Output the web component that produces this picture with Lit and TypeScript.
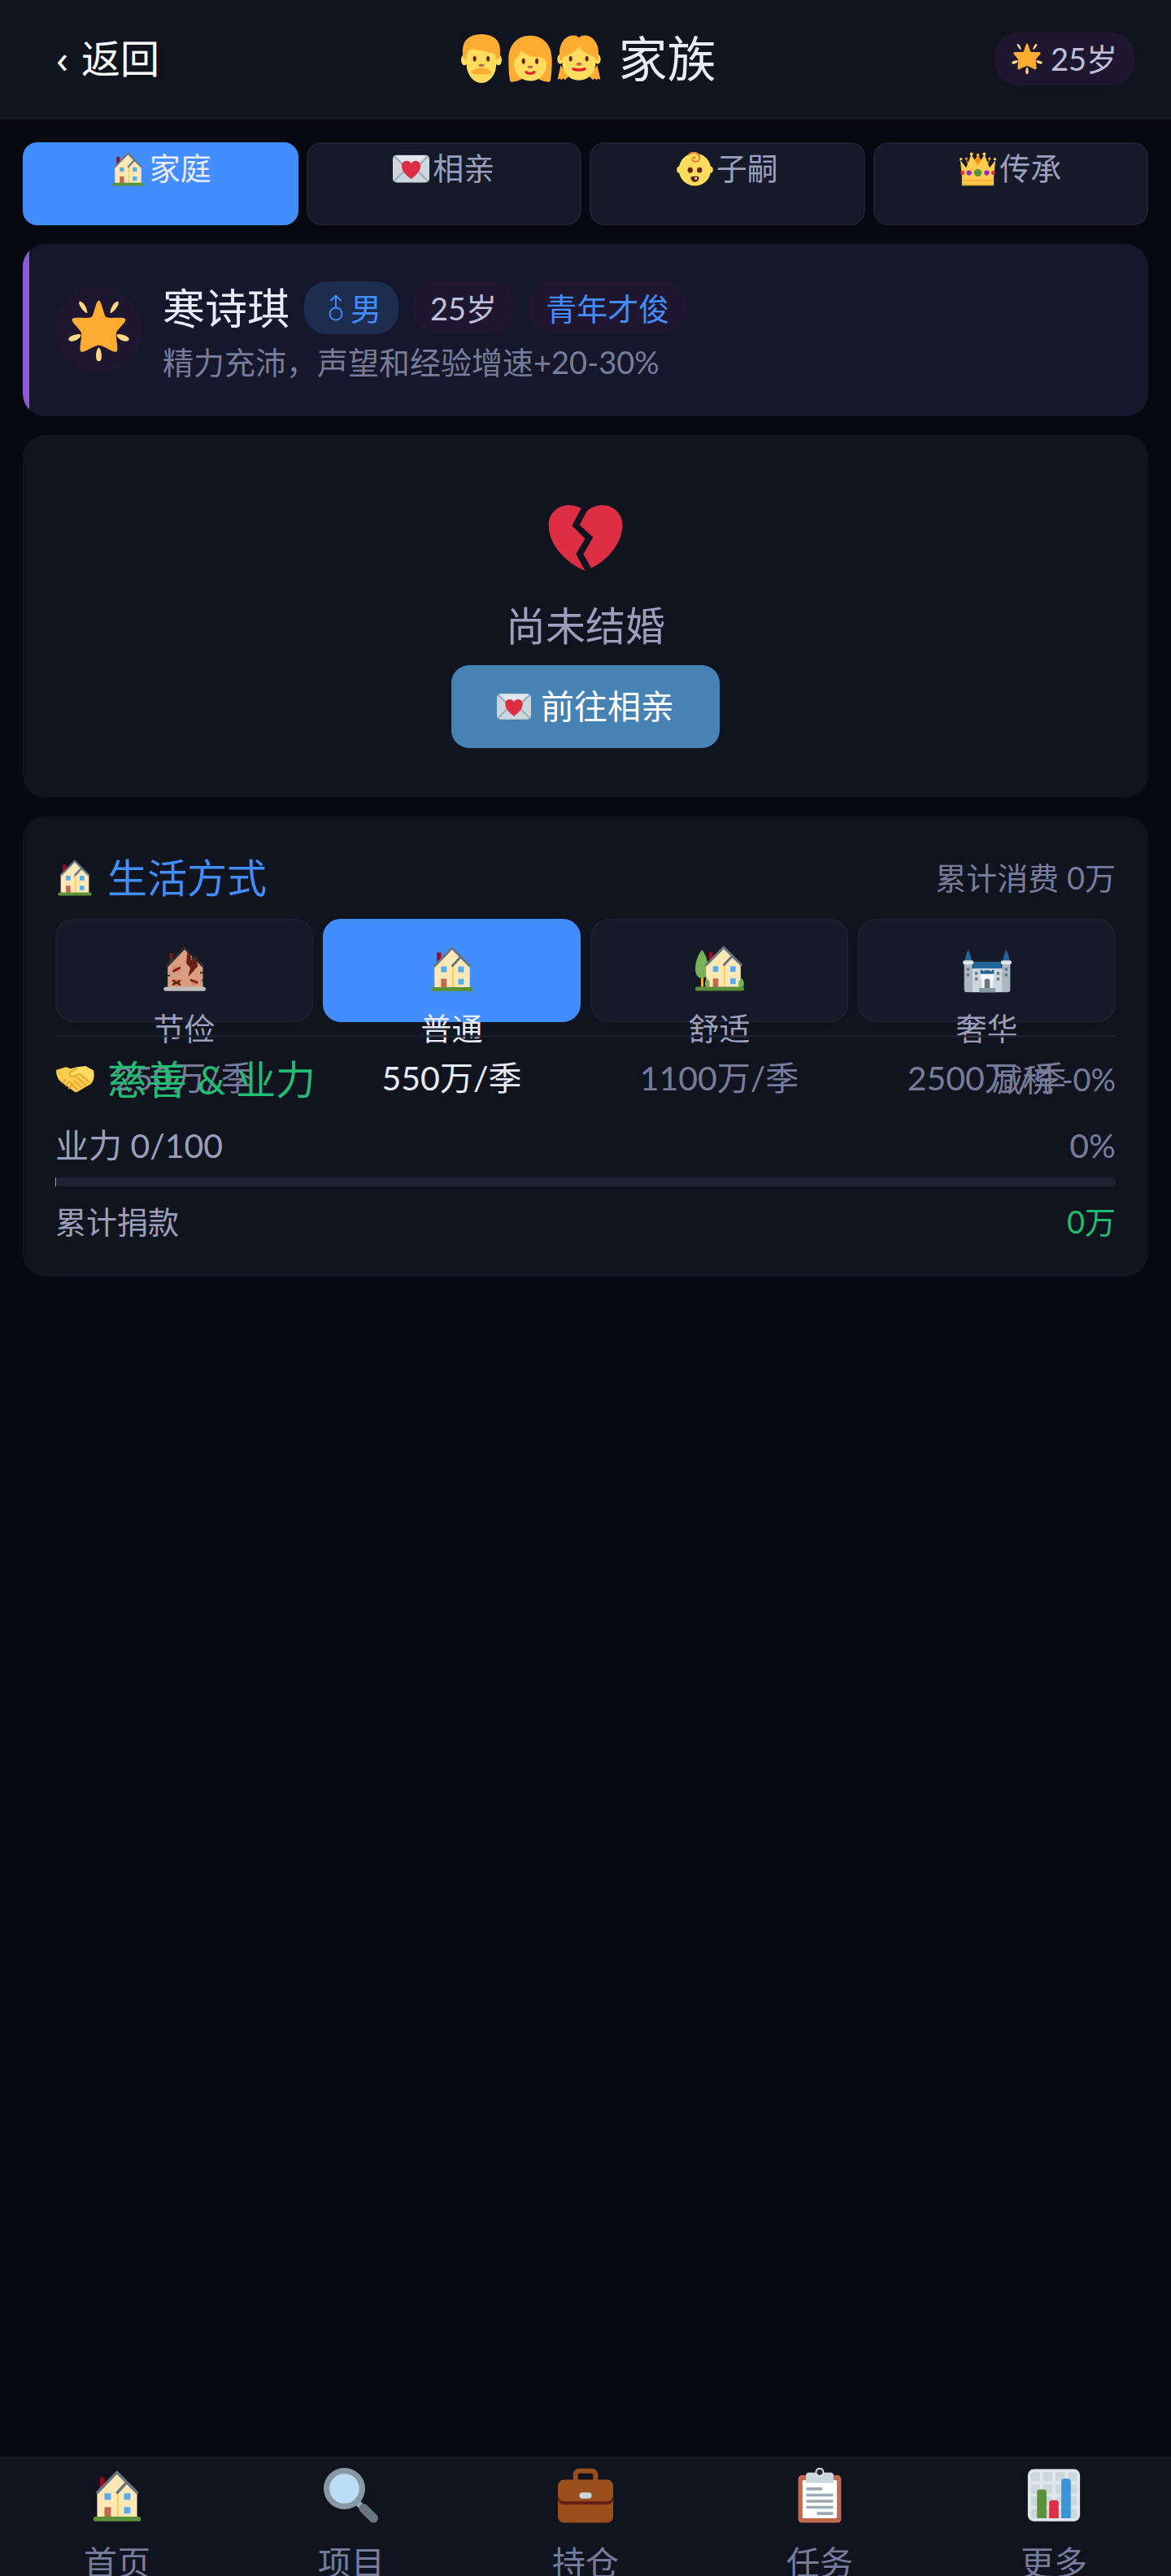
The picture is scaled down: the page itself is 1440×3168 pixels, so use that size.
import {LitElement, html, svg, css} from 'lit'
import {customElement, property, state} from 'lit/decorators.js'
import {classMap} from 'lit/directives/class-map.js'

// All glyphs are drawn on a 36 x 36 grid
const house = svg`
  <path fill="#a0041e" d="M6.7 6.2h3.2v8H6.7z"/>
  <path fill="#ffe8b6" d="M5 16 18 2.6l6.4 8L31 17v15.5H5z"/>
  <path fill="#ffcc4d" d="M18 16h1v16h-1z"/>
  <path fill="none" stroke="#66757f" stroke-width="1.8" stroke-linecap="round" stroke-linejoin="miter" d="M5.2 16 17.9 2.9 30.9 16M18.2 16l5.6-6"/>
  <path fill="#55acee" d="M9.8 16.5H14v4.3H9.8zM22.5 16.5h4.2v4.3h-4.2zM22.5 25.6h4.2v4.2h-4.2z"/>
  <path fill="#c1694f" d="M9.8 25.6H14V32H9.8z"/>
  <rect fill="#5c913b" x="2.5" y="31.8" width="31" height="3" rx="1.5"/>`

const gardenHouse = svg`
  <path fill="#ffac33" d="M4.2 24h1.8v8H4.2z"/>
  <path fill="#77b255" d="M4.9 4.4C2 7.5 0 13.5 0 18.5c0 4 2 6.800 4.900 6.800s4.700-2.800 4.700-6.800c0-5-1.800-11-4.700-14.100z"/>
  <path fill="#a0041e" d="M10.2 6H13v7h-2.800z"/>
  <path fill="#ffe8b6" d="M8 15.500 21 2.300l6.500 7.500 6 6V32H8z"/>
  <path fill="#ffcc4d" d="M21 15h1v17h-1z"/>
  <path fill="none" stroke="#66757f" stroke-width="1.8" stroke-linecap="round" d="M8.200 15.300 21 2.500l12.800 12.800M21.200 15.300l5.500-5.800"/>
  <path fill="#55acee" d="M13 16.400h4v4.200h-4zM25.800 16.400h4v4.200h-4zM25.800 25.400h4v4.200h-4z"/>
  <path fill="#c1694f" d="M13 25.400h4V32h-4z"/>
  <path fill="#77b255" d="M8.500 25.200c-1.400 1.500-1.800 5-.6 6.500h2.400c1-2.500.1-5.200-1.800-6.500zM34 25.200c-2 1.500-2.800 4.500-1.800 6.500h3.200c1-2.500.4-5.200-1.400-6.500z"/>
  <rect fill="#5c913b" y="31.5" width="36" height="3" rx="1.5"/>`

const ruin = svg`
  <path fill="#662113" d="M6.800 6.800h3v7h-3z"/>
  <path fill="#d99e82" d="M5.500 16.500 18 3.400l3 3.400 3.500 3.500 7 6.200V32H5.500z"/>
  <path fill="none" stroke="#292f33" stroke-width="1.7" stroke-linejoin="round" d="M4.600 16.800 18 2.800l3.200 3.600M23.200 11l2-1.200 6.600 6.800"/>
  <path fill="#662113" d="m20 5.600 2.400 2 .4 4.200 3.800-1.800 1.200 6.400-7.200 7.800 1.600-6.600-3-3.400z"/>
  <path fill="#dd7c5f" d="M9.500 16.700h5v4.200h-5zM9.500 26h5v5h-5zM23 26h4.500v4h-4.500z"/>
  <path fill="none" stroke="#662113" stroke-width="1.5" stroke-linecap="round" d="m9.700 20 4.600-2.400M9.500 27l5 2.800M9.500 29.800l5-2.600M22.600 26.600l4.800 1.800"/>
  <path stroke="#292f33" stroke-width="1.2" d="M5 23.200h2.300M29.400 21.200H32M30.500 26.800H32"/>
  <rect fill="#bcbec0" x="2.6" y="31.6" width="31" height="3" rx="1.5"/>`

const castle = svg`
  <path fill="#226699" d="M4 4c-1.200 2.600-2 5-2.600 8.500h5.200C6 9 5.200 6.600 4 4zM32 4c-1.200 2.600-2 5-2.600 8.500h5.200C34 9 33.200 6.600 32 4zM7.500 13h21v6h-21z"/>
  <path fill="#aab8c2" d="M1 14h6v21.600H3a2 2 0 0 1-2-2zM29 14h6v19.600a2 2 0 0 1-2 2h-4z"/>
  <path fill="#ccd6dd" d="M6.800 18h22.400v17.600H6.800z"/>
  <rect fill="#e1e8ed" y="12.2" width="8" height="2.8" rx="1.4"/>
  <rect fill="#e1e8ed" x="28" y="12.2" width="8" height="2.8" rx="1.4"/>
  <path fill="#f5f8fa" d="M13 21h10v5l-1 1v6h-8v-6l-1-1z"/>
  <path fill="#226699" d="M13 19h1.500v1H16v-.6h4v.6h1.500v-1H23v3H13z"/>
  <path fill="#66757f" d="M2.800 17.500h2v2.200h-2zM2.800 21.700h2v2.200h-2zM31 17.500h2v2.200h-2zM31 21.700h2v2.200h-2zM9 20.500h2v2.200H9zM9 24.700h2v2.200H9zM25 20.500h2v2.200h-2zM25 24.700h2v2.200h-2zM16 33v-5.500a2 2 0 0 1 4 0V33z"/>
  <path fill="#8899a6" d="M12 32.400h12v3.200H12z"/>`

const man = svg`
  <ellipse fill="#ffdc5d" cx="5.4" cy="19" rx="2.4" ry="4"/>
  <ellipse fill="#ffdc5d" cx="30.6" cy="19" rx="2.4" ry="4"/>
  <path fill="#ffac33" d="M18 0C9 0 4.200 5 4.200 11.500V17l3 2h21.600l3-2v-5.500C31.800 5 27 0 18 0z"/>
  <path fill="#ffdc5d" d="M7.500 14.500c.8-1.800 2.500-3.200 4.500-3.800 1.500 1 3 1.500 4.800 1.600l-.6-1.300 3 2 .1-1.300c1.200 1.300 2.500 1.700 4.200 1.800 2.600.2 4.500.7 5 2.500.8 3 .8 7-.1 10.500C27 31.500 23 36 18 36S9 31.500 7.600 26.500c-.9-3.500-.9-9-.1-12z"/>
  <path fill="#ffac33" d="M10.200 28.500c1-1.600 3.300-3 5.300-3.300 1.700-.3 3.300-.3 5 0 2 .3 4.300 1.700 5.300 3.300l-1.600.3-.5.9-1.400-.4-1 .9-1.300-.8-1 .8-1-.8-1 .8-1.200-.8-1.300.6-.9-.7-1.400.3-.5-.8z"/>
  <ellipse fill="#662113" cx="13" cy="18.2" rx="1.2" ry="2"/>
  <ellipse fill="#662113" cx="22.9" cy="18.2" rx="1.2" ry="2"/>
  <rect fill="#c1694f" x="16" y="22" width="4" height="2" rx="1"/>`

const woman = svg`
  <path fill="#ffac33" d="M18 1C8 1 2 8.500 2 18.500c0 5 .1 11.500 1.200 16.500 2.300.6 5.500-.2 8.300-1.800h13c2.800 1.600 6 2.400 8.300 1.800C33.900 30 34 23.500 34 18.500 34 8.500 28 1 18 1z"/>
  <path fill="#ffdc5d" d="M6 21.500c0-3.500 3.500-4 5.200-9.500 3 3.300 7.500 4.500 12.500 5 3.700.4 6.300 1.500 6.300 5 0 7-5 12.500-12 12.500S6 28.500 6 21.500z"/>
  <ellipse fill="#662113" cx="13" cy="20" rx="1.2" ry="2.1"/>
  <ellipse fill="#662113" cx="22.9" cy="20" rx="1.2" ry="2.1"/>
  <rect fill="#c1694f" x="16" y="23.2" width="4" height="2" rx="1"/>
  <path fill="none" stroke="#df1f32" stroke-width="2" stroke-linecap="round" d="M15 28c1.600 1.400 4.400 1.400 6 0"/>`

const girl = svg`
  <path fill="#ffac33" d="M4.500 23 2.200 33.500l2-.8.600 1.200 1.600-1.200 1.400 1 3-3zM31.500 23l2.300 10.500-2-.8-.6 1.200-1.600-1.200-1.400 1-3-3z"/>
  <ellipse fill="#ffdc5d" cx="4.2" cy="18.5" rx="2.2" ry="3.6"/>
  <ellipse fill="#ffdc5d" cx="31.8" cy="18.5" rx="2.2" ry="3.6"/>
  <path fill="#ffac33" d="M18 2.600C16.500 1 14.500.8 12.500 1 7 1.800 3.600 7.500 3.600 13.500V19h28.800v-5.500C32.400 7.500 29 1.800 23.500 1c-2-.2-4 0-5.500 1.600z"/>
  <path fill="#ffdc5d" d="M5.500 19.500c0-5 9.500-3.500 12.500-11 3 7.500 12.500 6 12.500 11C30.500 28 25.500 34 18 34S5.500 28 5.500 19.500z"/>
  <ellipse fill="#662113" cx="11.8" cy="18.2" rx="1.2" ry="2"/>
  <ellipse fill="#662113" cx="23.8" cy="18.2" rx="1.2" ry="2"/>
  <rect fill="#c1694f" x="16" y="21" width="4" height="2.2" rx="1.1"/>
  <path fill="none" stroke="#df1f32" stroke-width="2" stroke-linecap="round" d="M13.800 25.700c2.600.9 5.800.9 8.400 0"/>`

const star = svg`
  <path fill="#ffac33" d="M18 .2c1.600 0 2.800 8.200 4.200 9.800 1.500 1.300 10.500-.5 11.500 1.200 1 1.800-5 6-5.400 8.500-.4 2.800 1.600 9.800.2 10.800-1.700 1-7.500-3.800-10.500-3.800S9.200 31.500 7.500 30.500c-1.400-1 .6-8 .2-10.800-.4-2.500-6.400-6.700-5.400-8.500 1-1.700 10 .1 11.500-1.200C15.200 8.400 16.400.2 18 .2z"/>
  <path fill="#ffd983" d="M6.500 1c2-1 5 4.500 4.700 6.700-1.500 0-5.800-5-4.700-6.700zM29.500 1c-2-1-5 4.500-4.700 6.700 1.500 0 5.800-5 4.700-6.700zM7.500 20.500C6 19.600 1 21 .2 22.700c-.4 1.600 1.800 2 3.800 1.300 2-.8 3.400-2.400 3.500-3.500zM28.500 20.500c1.500-.9 6.500.5 7.300 2.200.4 1.600-1.800 2-3.800 1.300-2-.8-3.400-2.400-3.500-3.500zM18 28c-1.600 1-2.400 6.800-.7 8h1.400c1.700-1.200.9-7-.7-8z"/>`

const loveLetter = svg`
  <rect fill="#ccd6dd" y="4.5" width="36" height="27" rx="4"/>
  <path fill="#e1e8ed" d="M3 4.800h30L20 17.500c-1.200 1-2.800 1-4 0z"/>
  <path fill="none" stroke="#99aab5" stroke-width="1.5" d="m1 30.500 13-13M35 30.500l-13-13M1 5.500 14 18M35 5.500 22 18"/>
  <path fill="#dd2e44" d="M27.200 15.500c0-6-6.800-6.800-9.200-2.700-2.400-4.100-9.200-3.300-9.200 2.700 0 5.500 5.700 10 9.200 12.500 3.500-2.500 9.200-7 9.200-12.500z"/>`

const baby = svg`
  <ellipse fill="#ffdc5d" cx="2.6" cy="19" rx="2.4" ry="3.2"/>
  <ellipse fill="#ffdc5d" cx="33.4" cy="19" rx="2.4" ry="3.2"/>
  <ellipse fill="#ffdc5d" cx="18" cy="18.8" rx="15.8" ry="16"/>
  <path fill="none" stroke="#e78b32" stroke-width="1.8" stroke-linecap="round" d="M12.500 3.800C16 1 22.500 2 22.500 7c0 5.500-7 5-7 1.500 0-1.700 1.800-2.200 2.800-1.200"/>
  <ellipse fill="#662113" cx="13.4" cy="19.3" rx="2.5" ry="2.7"/>
  <ellipse fill="#662113" cx="22.6" cy="19.3" rx="2.5" ry="2.7"/>
  <path fill="#662113" d="M14 26c2.500-.9 5.500-.9 8 0 0 3.400-1.500 5-4 5s-4-1.600-4-5z"/>
  <path fill="#fff" d="M18 26.500h2v2h-2z"/>`

const crown = svg`
  <path fill="#f4900c" d="m6 8.500 4 10h16l4-10-5 6-7-10-7 10z"/>
  <path fill="#ffcc4d" d="M2.300 34.500V25L.7 9.500l5.800 7.500L11.500 4 18 14.500 24.500 4l5 13 5.800-7.500L33.700 25v9.500z"/>
  <g fill="#ffac33"><circle cx="6.6" cy="8" r="1.3"/><circle cx="18" cy="4.5" r="1.5"/><circle cx="29.4" cy="8" r="1.3"/><path d="M2.300 29h31.400v1.300H2.300zM2.300 32.700h31.400v1.300H2.300z"/></g>
  <g fill="#ffcc4d"><circle cx="1.3" cy="8.5" r="1.3"/><circle cx="11.7" cy="3.5" r="1.6"/><circle cx="24.3" cy="3.5" r="1.6"/><circle cx="34.7" cy="8.5" r="1.3"/></g>
  <circle fill="#5c913b" cx="18" cy="22" r="3.8"/>
  <g fill="#9326d5"><circle cx="9.3" cy="22" r="2.5"/><circle cx="26.7" cy="22" r="2.5"/></g>
  <g fill="#dd2e44"><circle cx="2.9" cy="22" r="2"/><circle cx="33.1" cy="22" r="2"/></g>`

const brokenHeart = svg`
  <path fill="#dd2e44" d="M16 4.500C9 .8 1 4.500 1 12.500c0 8.500 8 17.500 16.800 20.800l-4.200-7.700 4.200-7-6-6zM18.700 5.800C25 .2 35 3.500 35 12.500c0 7.700-6.500 16-14.400 19.600L17 25.700l4.500-7.800-6.200-5.700z"/>`

const handshake = svg`
  <path fill="#ffcc4d" d="M1 9.500 10 7l4 1.500L20 7l8-1 7 4c1 3 1.500 8-2 12.500L21 29.500c-1.500 1-3 .8-4-.3L5 20.500C1.500 17 .5 13 1 9.500z"/>
  <path fill="#ffdc5d" d="m13 12 7-5 8-.5 7 3.500c1 4 0 8-3 11l-9.500-7.500-4 2c-3 1.800-6.500.5-5.500-3.500z"/>
  <path fill="none" stroke="#e39f2b" stroke-width="1.2" stroke-linecap="round" stroke-linejoin="round" d="m20 7.500-6.500 4.700c-1 3 1.500 4.600 4.500 3l4.300-2L32 21M20.500 17l7.500 6.800M17.500 19.500l6.500 6.200M14.500 22l5.500 5.500M6.500 21.500l3-3M9.500 24l3.500-3.500M12.500 26.500l3.500-3.500"/>`

const magnifier = svg`
  <path stroke="#9aaab4" stroke-width="4" d="m21.500 22 4 4"/>
  <path stroke="#66757f" stroke-width="6" stroke-linecap="round" d="m26 26.300 6.500 6.500"/>
  <circle fill="#8899a6" cx="13.5" cy="13.5" r="13.5"/>
  <circle fill="#bbddf5" cx="13.5" cy="13.5" r="9.7"/>`

const briefcase = svg`
  <path fill="none" stroke="#9a4e1c" stroke-width="3.2" d="M11.500 9V4.500a2.500 2.500 0 0 1 2.500-2.500h8a2.500 2.500 0 0 1 2.500 2.500V9"/>
  <rect fill="#9a4e1c" y="12" width="36" height="23.7" rx="4"/>
  <path fill="#662113" d="M0 12h36v8a4 4 0 0 1-4 4H4a4 4 0 0 1-4-4z"/>
  <path fill="#9a4e1c" d="M4 7.700h28a4 4 0 0 1 4 4v6a4 4 0 0 1-4 4H4a4 4 0 0 1-4-4v-6a4 4 0 0 1 4-4z"/>
  <rect fill="#ccd6dd" x="14" y="16" width="8" height="4" rx="2"/>`

const clipboard = svg`
  <rect fill="#c1694f" x="4" y="4.8" width="28" height="31" rx="2.5"/>
  <rect fill="#fff" x="6.8" y="8" width="22.4" height="24.8" rx="1"/>
  <path fill="#ccd6dd" d="M9 9.800V5a2 2 0 0 1 2-2h14a2 2 0 0 1 2 2v4.800z"/>
  <circle fill="#292f33" stroke="#e1e8ed" cx="18" cy="2.8" r="2.4"/>
  <path stroke="#99aab5" stroke-width="1.9" stroke-linecap="round" d="M10 13.700h9M10 17.700h16M10 21.700h16M10 25.700h16M17 29.700h9"/>`

const chart = svg`
  <rect fill="#e1e8ed" x="1" y=".8" width="34" height="34" rx="4"/>
  <path fill="#ccd6dd" d="M5 2.800h3.800v6H3v-4a2 2 0 0 1 2-2zM10.800 2.800H17v6h-6.200zM19 2.800h6.200v6H19zM27.200 2.800H31a2 2 0 0 1 2 2v4h-5.800zM3 10.800h5.800v6H3zM10.800 10.800H17v6h-6.200zM19 10.800h6.200v6H19zM27.200 10.800H33v6h-5.800zM3 18.800h5.800v6H3zM10.800 18.800H17v6h-6.200zM19 18.800h6.200v6H19zM27.200 18.800H33v6h-5.800zM3 26.800h5.800v6H5a2 2 0 0 1-2-2zM10.800 26.800H17v6h-6.200zM19 26.800h6.200v6H19zM27.200 26.800H33v4a2 2 0 0 1-2 2h-3.800z"/>
  <path fill="#5c913b" d="M7 32.800V16a2 2 0 0 1 2-2h2.200a2 2 0 0 1 2 2v16.800z"/>
  <path fill="#dd2e44" d="M14.900 32.800V23a2 2 0 0 1 2-2h2.200a2 2 0 0 1 2 2v9.800z"/>
  <path fill="#3b94d9" d="M22.800 32.800V9a2 2 0 0 1 2-2H27a2 2 0 0 1 2 2v23.800z"/>`

const male = svg`
  <g fill="none" stroke="currentColor" stroke-width="1.9"><circle cx="18" cy="25" r="7.5"/><path d="M18 17.500V2.500M11.500 9 18 2.500 24.500 9"/></g>`

const glyph = (shape: unknown, name = '') => html`
  <svg class="glyph ${name}" viewBox="0 0 36 36" aria-hidden="true">${shape}</svg>
`

const tabs = [
  {id: 'home', label: '家庭', icon: house},
  {id: 'date', label: '相亲', icon: loveLetter},
  {id: 'children', label: '子嗣', icon: baby},
  {id: 'legacy', label: '传承', icon: crown},
]

const lifestyles = [
  {id: 'frugal', label: '节俭', price: '250万/季', icon: ruin},
  {id: 'normal', label: '普通', price: '550万/季', icon: house},
  {id: 'comfort', label: '舒适', price: '1100万/季', icon: gardenHouse},
  {id: 'luxury', label: '奢华', price: '2500万/季', icon: castle},
]

const links = [
  {href: '#home', label: '首页', icon: house},
  {href: '#projects', label: '项目', icon: magnifier},
  {href: '#positions', label: '持仓', icon: briefcase},
  {href: '#tasks', label: '任务', icon: clipboard},
  {href: '#more', label: '更多', icon: chart},
]

/**
 * Progress of the karma, from 0 to max
 *
 * @element karma-bar
 */
@customElement('karma-bar')
export class KarmaBar extends LitElement {
  static override styles = css`
    :host {
      display: block;
      height: 11px;
      border-radius: 5px;
      background: #202233;
    }
    .fill {
      height: 100%;
      min-width: 1px;
      background: #9c9fbb;
    }
  `

  @property({type: Number})
  value = 0

  @property({type: Number})
  max = 100

  override render() {
    return html`<div class="fill" style="width: ${this.value / this.max * 100}%"></div>`
  }
}

@customElement('app-root')
export class AppRoot extends LitElement {
  static override styles = css`
    :host {
      --panel: #10141f;
      --tile: #151a29;
      --line: #1d202f;
      --accent: #428dff;
      --bright: #e8ebfa;
      --soft: #9c9fbb;
      --muted: #777c9b;
      --green: #22bd74;
      display: flex;
      flex-direction: column;
      min-height: 100vh;
      background: #060910;
      color: var(--soft);
      font: 400 38px/56px Lato, "Noto Sans CJK SC", sans-serif;
    }
    * {
      box-sizing: border-box;
    }
    h1, h2, p {
      margin: 0;
      font-weight: inherit;
    }
    button {
      margin: 0;
      font: inherit;
      color: inherit;
      cursor: pointer;
    }
    .glyph {
      display: block;
      flex: none;
      width: 45px;
      height: 45px;
    }

    .top {
      display: flex;
      align-items: center;
      justify-content: space-between;
      height: 147px;
      padding: 0 45px;
      background: var(--panel);
      border-bottom: 3px solid #161c27;
    }
    .back {
      display: flex;
      align-items: center;
      gap: 16px;
      padding: 0 24px;
      border: none;
      background: none;
      color: #fff;
      font-size: 48px;
    }
    .arrow {
      font-family: "Noto Sans", sans-serif;
    }
    .title {
      display: flex;
      align-items: center;
      color: var(--bright);
      font-size: 60px;
    }
    .title .glyph {
      width: 60px;
      height: 60px;
    }
    .title-text {
      margin-left: 18px;
    }

    .chip {
      display: flex;
      align-items: center;
      height: 65px;
      padding: 0 21px;
      border-radius: 28px;
      background: #1f1730;
      color: #bfc0d8;
    }
    .chip .glyph {
      width: 36px;
      height: 38px;
    }
    .chip .spark {
      width: 38px;
      margin-right: 10px;
    }
    .male {
      background: #1c2d50;
      color: var(--accent);
    }
    .stage {
      color: var(--accent);
    }

    .content {
      flex: 1;
      display: flex;
      flex-direction: column;
      gap: 23px;
      padding: 28px;
    }
    .tabs {
      display: grid;
      grid-template-columns: repeat(4, 1fr);
      gap: 10px;
    }
    .tab {
      display: flex;
      align-items: flex-start;
      justify-content: center;
      gap: 4px;
      height: 102px;
      padding: 1px 0 0;
      border: 2px solid var(--line);
      border-radius: 18px;
      background: var(--tile);
    }
    .tab .glyph {
      margin-top: 7px;
    }
    .tab.active, .option.active {
      background: var(--accent);
      border-color: var(--accent);
      color: var(--bright);
    }

    .card {
      display: flex;
      flex-direction: column;
      border-radius: 28px;
      background: var(--panel);
    }
    .profile {
      flex-direction: row;
      align-items: center;
      gap: 26px;
      padding: 46px 40px;
      background: linear-gradient(to right, #8e5bd6 8px, #15182a 8px);
    }
    .avatar {
      display: grid;
      place-items: center;
      width: 106px;
      height: 106px;
      border-radius: 50%;
      background: #1f1730;
    }
    .avatar .glyph {
      width: 75px;
      height: 75px;
    }
    .who {
      display: flex;
      flex-wrap: wrap;
      align-items: center;
      gap: 18px;
      margin-bottom: 13px;
    }
    .name {
      color: var(--bright);
      font-size: 52px;
    }
    .trait {
      color: var(--muted);
      line-height: 42px;
    }

    .single {
      align-items: center;
      padding: 78px 40px 61px;
    }
    .single > .glyph {
      width: 96px;
      height: 96px;
    }
    .status {
      margin: 30px 0 19px;
      font-size: 49px;
      line-height: 60px;
    }
    .go {
      display: flex;
      align-items: center;
      gap: 12px;
      height: 102px;
      padding: 0 56px;
      border: none;
      border-radius: 22px;
      background: #4682b4;
      color: #fff;
      font-size: 41px;
    }
    .go .glyph {
      width: 42px;
      height: 42px;
    }

    .living {
      padding: 45px 40px 40px;
    }
    .row {
      display: flex;
      align-items: center;
      justify-content: space-between;
    }
    .heading {
      display: flex;
      align-items: center;
      gap: 16px;
      font-size: 49px;
      line-height: 60px;
      color: var(--accent);
    }
    .heading .glyph {
      width: 48px;
      height: 48px;
    }
    .note {
      color: var(--muted);
    }
    .options {
      display: grid;
      grid-template-columns: repeat(4, 1fr);
      gap: 12px;
      margin: 21px 0 16px;
    }
    /* Fixed height, the captions run over the bottom edge */
    .option {
      display: flex;
      flex-direction: column;
      align-items: center;
      justify-content: flex-start;
      height: 127px;
      padding: 29px 0 0;
      border: 2px solid var(--line);
      border-radius: 22px;
      background: var(--tile);
      white-space: nowrap;
    }
    .option .glyph {
      width: 60px;
      height: 60px;
    }
    .option-name {
      margin: 15px 0 6px;
    }
    .price {
      font-size: 41px;
      color: var(--muted);
    }
    .active .price {
      color: inherit;
    }
    .charity {
      padding-top: 21px;
      border-top: 3px solid #1d202fcc;
    }
    .charity .heading, .donated {
      color: var(--green);
    }
    .karma {
      margin: 24px 0 11px;
      font-size: 41px;
    }
    .donations {
      margin-top: 15px;
    }

    .nav {
      display: grid;
      grid-template-columns: repeat(5, 1fr);
      height: 147px;
      border-top: 3px solid #171b26;
      background: var(--panel);
      overflow: hidden;
    }
    .link {
      display: flex;
      flex-direction: column;
      align-items: center;
      gap: 21px;
      padding-top: 11px;
      color: var(--muted);
      font-size: 41px;
      text-decoration: none;
    }
    .link .glyph {
      width: 68px;
      height: 68px;
    }
  `

  @state()
  private tab = 'home'

  @state()
  private lifestyle = 'normal'

  override render() {
    return html`
      <header class="top">
        <button class="back"><span class="arrow">‹</span>返回</button>
        <h1 class="title">
          ${glyph(man)}${glyph(woman)}${glyph(girl)}
          <span class="title-text">家族</span>
        </h1>
        <span class="chip">${glyph(star, 'spark')}25岁</span>
      </header>
      <main class="content">
        <div class="tabs" role="tablist">
          ${tabs.map(tab => html`
            <button
              role="tab"
              class=${classMap({tab: true, active: tab.id === this.tab})}
              aria-selected=${tab.id === this.tab}
              @click=${() => this.tab = tab.id}
            >${glyph(tab.icon)}<span>${tab.label}</span></button>
          `)}
        </div>
        ${this.renderProfile()}
        <section class="card single">
          ${glyph(brokenHeart)}
          <p class="status">尚未结婚</p>
          <button class="go" @click=${() => this.tab = 'date'}>${glyph(loveLetter)}前往相亲</button>
        </section>
        ${this.renderLiving()}
      </main>
      <nav class="nav">
        ${links.map(link => html`
          <a class="link" href=${link.href}>${glyph(link.icon)}<span>${link.label}</span></a>
        `)}
      </nav>
    `
  }

  private renderProfile() {
    return html`
      <section class="card profile">
        <div class="avatar">${glyph(star)}</div>
        <div>
          <div class="who">
            <span class="name">寒诗琪</span>
            <span class="chip male">${glyph(male)}男</span>
            <span class="chip">25岁</span>
            <span class="chip stage">青年才俊</span>
          </div>
          <p class="trait">精力充沛，声望和经验增速+20-30%</p>
        </div>
      </section>
    `
  }

  private renderLiving() {
    return html`
      <section class="card living">
        <div class="row">
          <h2 class="heading">${glyph(house)}生活方式</h2>
          <span class="note">累计消费 0万</span>
        </div>
        <div class="options">
          ${lifestyles.map(option => html`
            <button
              class=${classMap({option: true, active: option.id === this.lifestyle})}
              aria-pressed=${option.id === this.lifestyle}
              @click=${() => this.lifestyle = option.id}
            >
              ${glyph(option.icon)}
              <span class="option-name">${option.label}</span>
              <span class="price">${option.price}</span>
            </button>
          `)}
        </div>
        <div class="row charity">
          <h2 class="heading">${glyph(handshake)}慈善 &amp; 业力</h2>
          <span class="note">减税 -0%</span>
        </div>
        <div class="row karma">
          <span>业力 0/100</span>
          <span class="note">0%</span>
        </div>
        <karma-bar value="0"></karma-bar>
        <div class="row donations">
          <span>累计捐款</span>
          <span class="donated">0万</span>
        </div>
      </section>
    `
  }
}

declare global {
  interface HTMLElementTagNameMap {
    'app-root': AppRoot
    'karma-bar': KarmaBar
  }
}
